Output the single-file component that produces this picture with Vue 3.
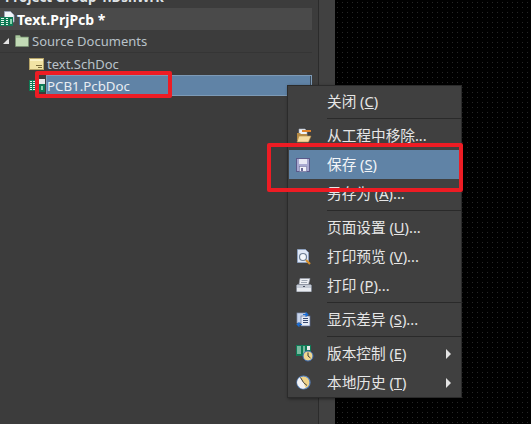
<script setup>
</script>

<template>
  <div class="screen">
    <section class="panel">
      <div class="clip-row"><span class="group-name">Project Group 1.DsnWrk</span></div>
      <div class="tree-row project">
        <svg class="ic-project" width="16" height="16" viewBox="0 0 16 16">
          <path d="M4.500 0.500h6l3.500 3.500v7H4.500z" fill="#f2f4f8" stroke="#9aa6c0" stroke-width="0.8"/>
          <rect x="0" y="6" width="13" height="9" fill="#0f7a55"/>
          <path d="M1 7.500h3M1 9.500h3M1 11.500h3M1 13.500h3M6 7.500h2M6 9.500h2M6 11.500h2M6 13.500h2" stroke="#e4f6ea" stroke-width="1"/>
          <rect x="10" y="8" width="2" height="5" fill="#8ad6ae"/>
        </svg>
        <span>Text.PrjPcb *</span>
      </div>
      <div class="tree-row source">
        <svg class="ic-expand" width="6" height="6" viewBox="0 0 6 6"><path d="M6 0V6H0z" fill="#e4e4e4"/></svg>
        <svg class="ic-folder" width="14" height="12" viewBox="0 0 14 12">
          <path d="M0.500 2V1q0-.7.7-.7h3.600l1 1.700h7.700v9.500H.5z" fill="#a9c79d" stroke="#7f9a78" stroke-width="0.6"/>
          <rect x="1" y="3" width="12" height="8" fill="#c2dab6"/>
        </svg>
        <span>Source Documents</span>
      </div>
      <div class="tree-row sch">
        <svg class="ic-sch" width="15" height="12" viewBox="0 0 15 12">
          <rect x="0.500" y="0.500" width="14" height="11" fill="#f1e3a4" stroke="#b5a367"/>
          <rect x="1" y="1" width="13" height="2" fill="#fbf3c8"/>
          <path d="M7 7.500h6M9 9.500h4" stroke="#7c6d3c" stroke-width="1"/>
        </svg>
        <span>text.SchDoc</span>
      </div>
      <div class="tree-row pcb">
        <svg class="ic-pcb" width="17" height="13" viewBox="0 0 17 13">
          <rect x="0" y="1" width="7" height="11" fill="#0f7a55"/>
          <path d="M1 2.500h2M1 4.500h2M1 6.500h2M1 8.500h2M1 10.500h2M4 2.500h2M4 4.500h2M4 6.500h2M4 8.500h2M4 10.500h2" stroke="#e4f6ea" stroke-width="1"/>
          <rect x="10" y="0" width="6" height="5" fill="#e8e8e8"/>
          <rect x="10" y="5" width="6" height="8" fill="#0f7a55"/>
          <rect x="12" y="7" width="2" height="4" fill="#8ad6ae"/>
        </svg>
        <span class="selected">PCB1.PcbDoc</span>
      </div>
    </section>

    <aside class="strip"></aside>
    <main class="canvas"></main>

    <div class="menu">
      <div class="item"><span class="icon"></span><span class="label">关闭 (<u>C</u>)</span></div>
      <div class="sep"></div>
      <div class="item">
        <span class="icon">
          <svg width="16" height="16" viewBox="0 0 16 16">
            <path d="M3 1h6l2 2v7H3z" fill="#f0f2f6" stroke="#9aa4b8" stroke-width="0.6"/>
            <rect x="6" y="2" width="9" height="2" fill="#e0852c"/>
            <path d="M1 5h3l1 1h6v6H1z" fill="#b58a45"/>
            <path d="M3 8h12l-2.500 6H1z" fill="#f6dca0" stroke="#b58a45" stroke-width="0.6"/>
          </svg>
        </span>
        <span class="label">从工程中移除...</span>
      </div>
      <div class="item active">
        <span class="icon">
          <svg width="14" height="14" viewBox="0 0 14 14">
            <rect x="0.500" y="0.500" width="13" height="13" fill="#a8a8d0" stroke="#5a5a8a"/>
            <rect x="3" y="1" width="8" height="5" fill="#e8e8f4"/>
            <rect x="3.500" y="8.500" width="7" height="5" fill="#f0f0f8" stroke="#6a6a98" stroke-width="0.5"/>
            <rect x="5" y="10" width="2" height="3" fill="#6a6a98"/>
          </svg>
        </span>
        <span class="label">保存 (<u>S</u>)</span>
      </div>
      <div class="item"><span class="icon"></span><span class="label">另存为 (<u>A</u>)...</span></div>
      <div class="sep"></div>
      <div class="item"><span class="icon"></span><span class="label">页面设置 (<u>U</u>)...</span></div>
      <div class="item">
        <span class="icon">
          <svg width="16" height="16" viewBox="0 0 16 16">
            <path d="M1.500 0.500h8l3 3v10h-11z" fill="#dfe8f6" stroke="#8ea4c8" stroke-width="0.8"/>
            <circle cx="7" cy="8" r="3.500" fill="#f4f8fc" stroke="#6e7e94" stroke-width="1.200"/>
            <path d="M10 11l4 4" stroke="#d8902c" stroke-width="2.200"/>
          </svg>
        </span>
        <span class="label">打印预览 (<u>V</u>)...</span>
      </div>
      <div class="item">
        <span class="icon">
          <svg width="16" height="15" viewBox="0 0 16 15">
            <path d="M4 0.500h10l-1.500 6H3z" fill="#eef0f4" stroke="#98a0ac" stroke-width="0.6"/>
            <path d="M5.500 2.500h6M5 4.500h6" stroke="#a0a8b4"/>
            <path d="M1.500 6.500h13l1 1v6h-15v-6z" fill="#c4cad4" stroke="#828a98" stroke-width="0.7"/>
            <rect x="1" y="10" width="14" height="3.500" fill="#e8ebf0"/>
            <rect x="7" y="8" width="2" height="1" fill="#4a5160"/>
          </svg>
        </span>
        <span class="label">打印 (<u>P</u>)...</span>
      </div>
      <div class="sep"></div>
      <div class="item">
        <span class="icon">
          <svg width="15" height="15" viewBox="0 0 15 15">
            <rect x="1" y="1" width="9" height="10" fill="#c8d4ea" stroke="#7e90b4" stroke-width="0.7"/>
            <rect x="5" y="4" width="9" height="10" fill="#e6ecf6" stroke="#5c6e98" stroke-width="0.7"/>
            <path d="M7 6.500h5M7 8.500h5M7 10.500h5" stroke="#3a4a70"/>
            <path d="M7 2.500h5M12 2.500l-2-2v4zM1 12.500h5M1 12.500l2-2v4z" fill="#1a6fd8" stroke="#1a6fd8"/>
          </svg>
        </span>
        <span class="label">显示差异 (<u>S</u>)...</span>
      </div>
      <div class="sep"></div>
      <div class="item">
        <span class="icon">
          <svg width="18" height="17" viewBox="0 0 18 17">
            <rect x="0" y="0" width="15" height="11" fill="#0f7a55"/>
            <path d="M1 2h4M1 4h4M1 6h4M1 8h4M7 2h2M7 4h2M7 6h2M7 8h2" stroke="#e4f6ea" stroke-width="1"/>
            <rect x="11" y="1" width="3" height="4" fill="#e8e8e8"/>
            <circle cx="12" cy="11" r="5" fill="#f0d890" stroke="#3c6cb8" stroke-width="1"/>
            <path d="M12 7.500v3.500l2.500 2" stroke="#3a3a3a" fill="none"/>
          </svg>
        </span>
        <span class="label">版本控制 (<u>E</u>)</span>
        <i class="arrow"></i>
      </div>
      <div class="item">
        <span class="icon">
          <svg width="15" height="15" viewBox="0 0 15 15">
            <circle cx="7.500" cy="7.500" r="6.500" fill="#f0d48a" stroke="#5a88c8" stroke-width="1.200"/>
            <path d="M7.500 7.500L4 2.200A6 6 0 0 0 2 10.500 6 6 0 0 0 9.500 13z" fill="#f2f2f4"/>
            <path d="M4.500 2.500l3 5 3.500 3" stroke="#3e3e3e" fill="none"/>
          </svg>
        </span>
        <span class="label">本地历史 (<u>T</u>)</span>
        <i class="arrow"></i>
      </div>
    </div>

    <div class="mark mark-tree"></div>
    <div class="mark mark-save"></div>
  </div>
</template>

<style>
html, body { margin: 0; background: #000; }
</style>

<style scoped>
.screen {
  position: relative;
  display: flex;
  width: 531px;
  height: 424px;
  overflow: hidden;
  font-family: "Noto Sans", "Noto Sans CJK SC", sans-serif;
  background: #000;
}
.panel {
  width: 318px;
  box-sizing: border-box;
  padding-right: 6px;
  background: #3c3c3c;
  color: #b9c2c9;
  font-size: 13px;
}
.strip {
  width: 16px;
  border-left: 1px solid #2b2b2b;
  background: #414141;
}
.canvas {
  flex: 1;
  background-color: #000;
  background-image: radial-gradient(circle at center, #262626 0.6px, transparent 0.8px);
  background-size: 5px 5px;
}
.clip-row {
  height: 8px;
  display: flex;
  align-items: flex-end;
  overflow: hidden;
  padding-left: 5px;
}
.group-name {
  font-weight: 700;
  font-size: 13.4px;
  line-height: 16px;
  color: #dfe3e6;
  white-space: nowrap;
  margin-bottom: 3px;
}
.tree-row {
  display: flex;
  align-items: center;
  height: 22px;
  white-space: nowrap;
}
.project {
  background: #4a4a4a;
  color: #fff;
  font-weight: 700;
  font-size: 14px;
}
.ic-project { margin-right: 1px; }
.source { border-bottom: 1px solid #353535; }
.ic-expand { margin-left: 3px; margin-right: 6px; }
.ic-folder { margin-right: 3px; }
.sch { padding-left: 29px; }
.ic-sch { margin-right: 3px; }
.pcb {
  padding-left: 29px;
  height: 21px;
}
.ic-pcb { flex: none; }
.selected {
  flex: 1;
  align-self: stretch;
  display: flex;
  align-items: center;
  color: #e8edf2;
  background: #6083a6;
  padding-left: 1px;
  font-size: 13.3px;
  box-shadow: inset 0 0 0 1px #7d9ab6, inset -2px 0 0 #3a4a5a;
}
.menu {
  position: absolute;
  left: 287px;
  top: 85px;
  width: 175px;
  height: 313px;
  box-sizing: border-box;
  padding: 1px;
  border: 1px solid #2b2b2b;
  background: #404040;
  box-shadow: 1px 1px 3px rgba(0, 0, 0, 0.45);
  color: #e6e6e6;
  font-size: 14.67px;
}
.item {
  display: flex;
  align-items: center;
  height: 29px;
}
.item.active { background: #6083a6; color: #f2f5f8; }
.icon {
  width: 18px;
  height: 18px;
  margin-left: 7px;
  margin-right: 13px;
  display: flex;
  align-items: center;
  justify-content: flex-start;
  flex: none;
}
.label { white-space: nowrap; line-height: 1; }
.sep {
  height: 5px;
  box-sizing: border-box;
  margin-left: 38px;
  margin-right: -1px;
  padding-top: 2px;
}
.sep::before {
  content: "";
  display: block;
  height: 1px;
  background: #2a2a2a;
}
.arrow {
  margin-left: auto;
  margin-right: 9px;
  width: 0;
  height: 0;
  border-left: 5px solid #e4e4e4;
  border-top: 5px solid transparent;
  border-bottom: 5px solid transparent;
}
.mark {
  position: absolute;
  box-sizing: border-box;
  border: 4px solid #ed1c24;
  border-radius: 2px;
}
.mark-tree { left: 35px; top: 71px; width: 137px; height: 27px; }
.mark-save { left: 267px; top: 143px; width: 196px; height: 49px; }
</style>
